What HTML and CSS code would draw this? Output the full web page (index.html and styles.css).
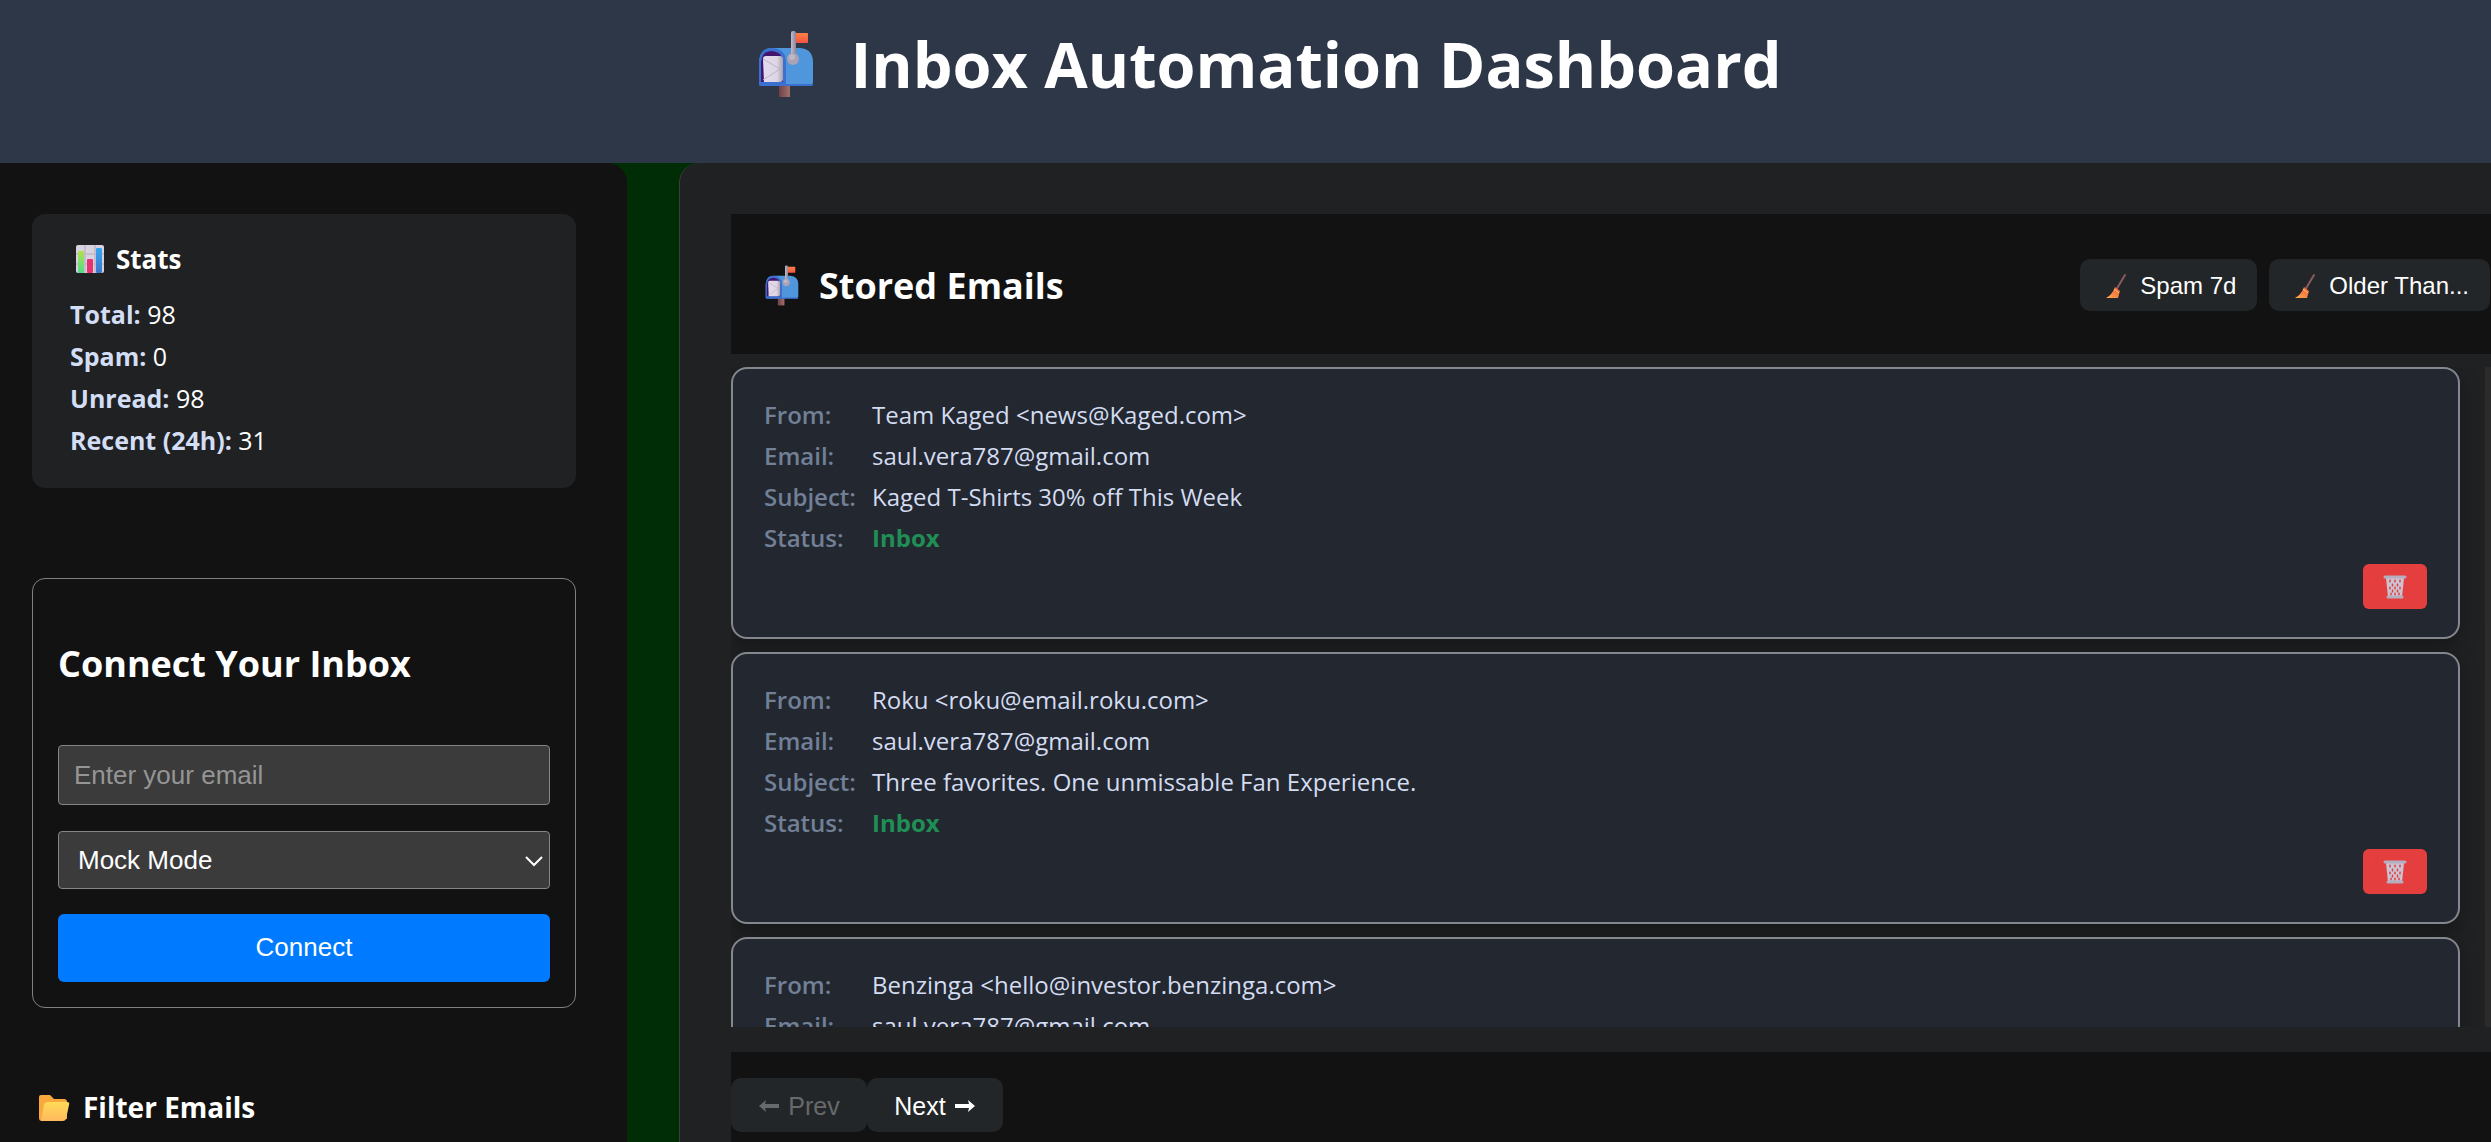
FILE: index.html
```html
<!DOCTYPE html>
<html lang="en">
<head>
<meta charset="utf-8">
<title>Inbox Automation Dashboard</title>
<link rel="stylesheet" href="styles.css">
</head>
<body>
<svg class="sprite" aria-hidden="true">
  <defs>
    <linearGradient id="flag" x1="0" y1="0" x2="0" y2="1"><stop offset="0" stop-color="#ff8044"/><stop offset="1" stop-color="#f45345"/></linearGradient>
    <linearGradient id="letter" x1="0" y1="0" x2="1" y2="0"><stop offset="0" stop-color="#e4daf0"/><stop offset=".7" stop-color="#ddd6e4"/><stop offset="1" stop-color="#a8a0ad"/></linearGradient>
    <linearGradient id="post" x1="0" y1="0" x2="1" y2="0"><stop offset="0" stop-color="#6f4049"/><stop offset="1" stop-color="#a1716c"/></linearGradient>
    <linearGradient id="pole" x1="0" y1="0" x2="1" y2="0"><stop offset="0" stop-color="#c3bcca"/><stop offset="1" stop-color="#8d8399"/></linearGradient>
    <linearGradient id="folder" x1="0" y1="0" x2="0" y2="1"><stop offset="0" stop-color="#ffdb57"/><stop offset="1" stop-color="#ffb95f"/></linearGradient>
    <linearGradient id="green" x1="0" y1="0" x2="0" y2="1"><stop offset="0" stop-color="#b0e04e"/><stop offset="1" stop-color="#52dc8b"/></linearGradient>
    <linearGradient id="blue" x1="0" y1="0" x2="0" y2="1"><stop offset="0" stop-color="#35a7f4"/><stop offset="1" stop-color="#3d77cb"/></linearGradient>
    <linearGradient id="bristle" x1="1" y1="0" x2="0" y2="1"><stop offset="0" stop-color="#f0553e"/><stop offset="1" stop-color="#ffb04e"/></linearGradient>
    <symbol id="i-mailbox" viewBox="0 0 56 68">
      <rect x="21" y="54" width="11" height="13" fill="url(#post)"/>
      <path d="M14 18H42Q55 19 55 32V52Q55 55 52 55H3Q1 55 1 53V32Q2 18 14 18Z" fill="#4f96dc"/>
      <path d="M1 53V32Q2 18 14 18Q28 19 28 32V55H3Q1 55 1 53Z" fill="#3a70cf"/>
      <path d="M3 52V32Q4 21 14 21Q25 22 25 33V52Z" fill="#43156f"/>
      <path d="M5 29Q5 26 8 26H22Q25 26 25 29V49Q25 52 22 52H6Z" fill="url(#letter)"/>
      <path d="M5 29L22 39L5 50" fill="none" stroke="#bdb3c5" stroke-width="1"/>
      <rect x="1" y="54" width="54" height="2" rx="1" fill="#3b6fd0"/>
      <rect x="37" y="3" width="13" height="10" rx="1" fill="url(#flag)"/>
      <rect x="33" y="1" width="5" height="28" rx="2" fill="url(#pole)"/>
      <circle cx="35" cy="29" r="6" fill="#aaa2b5"/><circle cx="34" cy="27" r="3" fill="#beb7c6"/>
    </symbol>
    <symbol id="i-chart" viewBox="0 0 28 28">
      <rect width="28" height="28" rx="2" fill="#d9d3df"/>
      <path d="M9 0V28M19 0V28M0 9H28M0 19H28" stroke="#bfb8c8" stroke-width="1.500"/>
      <rect x="2" y="6" width="6" height="22" rx="1" fill="url(#green)"/>
      <rect x="11" y="14" width="6" height="14" rx="1" fill="#e6336f"/>
      <rect x="20" y="3" width="6" height="25" rx="1" fill="url(#blue)"/>
    </symbol>
    <symbol id="i-folder" viewBox="0 0 32 28">
      <path d="M1 3Q1 1 3 1H12L16 5H26Q29 5 29 8V25L4 27Q1 27 1 24Z" fill="#f8a83c"/>
      <path d="M9 8H29Q32 8 31 11L28 25Q27 27 25 27H3L6 11Q7 8 9 8Z" fill="url(#folder)"/>
    </symbol>
    <symbol id="i-broom" viewBox="0 0 22 26">
      <path d="M20 2L11 17" stroke="#8c5a5e" stroke-width="2" stroke-linecap="round"/>
      <path d="M10 14L15 18L13 25H1Q7 22 10 14Z" fill="url(#bristle)"/>
      <path d="M9 16L14 20" stroke="#ffd05c" stroke-width="1"/>
    </symbol>
    <symbol id="i-trash" viewBox="0 0 24 24">
      <path d="M3 3L5 22H19L21 3Z" fill="#cbc3d2"/>
      <g fill="#e23f40"><path d="M7 4l1 2-1 2-1-2zM12 4l1 2-1 2-1-2zM17 4l1 2-1 2-1-2zM9.500 8l1 2-1 2-1-2zM14.500 8l1 2-1 2-1-2zM7 11l1 2-1 2-1-2zM12 11l1 2-1 2-1-2zM17 11l1 2-1 2-1-2zM9.500 14l1 2-1 2-1-2zM14.500 14l1 2-1 2-1-2zM12 17l1 2-1 2-1-2zM8 17l1 2-1 2-1-2zM16 17l1 2-1 2-1-2z"/></g>
      <path d="M2 2H22M5 22H19" stroke="#b5adc0" stroke-width="3" stroke-linecap="round"/>
    </symbol>
    <symbol id="i-left" viewBox="0 0 22 14"><path d="M1 7L8 1L7 5H21V9H7L8 13Z" fill="currentColor"/></symbol>
    <symbol id="i-right" viewBox="0 0 22 14"><path d="M21 7L14 1L15 5H1V9H15L14 13Z" fill="currentColor"/></symbol>
  </defs>
</svg>
<header class="page-header">
  <h1><svg class="icon-title"><use href="#i-mailbox"/></svg>Inbox Automation Dashboard</h1>
</header>
<div class="layout">
  <aside class="sidebar">
    <section class="stats">
      <h3><svg class="icon-chart"><use href="#i-chart"/></svg>Stats</h3>
      <p><strong>Total:</strong> 98</p>
      <p><strong>Spam:</strong> 0</p>
      <p><strong>Unread:</strong> 98</p>
      <p><strong>Recent (24h):</strong> 31</p>
    </section>
    <form class="connect">
      <h2>Connect Your Inbox</h2>
      <input type="email" placeholder="Enter your email" aria-label="Email">
      <div class="select-wrap">
        <select aria-label="Mode"><option>Mock Mode</option></select>
        <svg class="chevron" viewBox="0 0 18 12"><path d="M1 2L9 10L17 2" fill="none" stroke="#fff" stroke-width="2"/></svg>
      </div>
      <button type="button">Connect</button>
    </form>
    <h3 class="filter-title"><svg class="icon-folder"><use href="#i-folder"/></svg>Filter Emails</h3>
  </aside>
  <main class="main">
    <div class="toolbar">
      <h2><svg class="icon-mail"><use href="#i-mailbox"/></svg>Stored Emails</h2>
      <div class="actions">
        <button class="btn" type="button"><svg class="icon-broom"><use href="#i-broom"/></svg>Spam 7d</button>
        <button class="btn" type="button"><svg class="icon-broom"><use href="#i-broom"/></svg>Older Than...</button>
      </div>
    </div>
    <div class="list">
      <div class="cards">
        <article class="card">
          <dl>
            <dt>From:</dt><dd>Team Kaged &lt;news@Kaged.com&gt;</dd>
            <dt>Email:</dt><dd>saul.vera787@gmail.com</dd>
            <dt>Subject:</dt><dd>Kaged T-Shirts 30% off This Week</dd>
            <dt>Status:</dt><dd class="status">Inbox</dd>
          </dl>
          <button class="delete" type="button" aria-label="Delete"><svg><use href="#i-trash"/></svg></button>
        </article>
        <article class="card">
          <dl>
            <dt>From:</dt><dd>Roku &lt;roku@email.roku.com&gt;</dd>
            <dt>Email:</dt><dd>saul.vera787@gmail.com</dd>
            <dt>Subject:</dt><dd>Three favorites. One unmissable Fan Experience.</dd>
            <dt>Status:</dt><dd class="status">Inbox</dd>
          </dl>
          <button class="delete" type="button" aria-label="Delete"><svg><use href="#i-trash"/></svg></button>
        </article>
        <article class="card">
          <dl>
            <dt>From:</dt><dd>Benzinga &lt;hello@investor.benzinga.com&gt;</dd>
            <dt>Email:</dt><dd>saul.vera787@gmail.com</dd>
          </dl>
        </article>
      </div>
      <div class="track"></div>
    </div>
    <nav class="pager" aria-label="Pages">
      <button class="btn" type="button" disabled><svg class="arrow"><use href="#i-left"/></svg>Prev</button>
      <button class="btn" type="button">Next<svg class="arrow"><use href="#i-right"/></svg></button>
    </nav>
  </main>
</div>
</body>
</html>
```
FILE: styles.css
```css
* { box-sizing: border-box; }

body {
  margin: 0;
  height: 100vh;
  overflow: hidden;
  display: flex;
  flex-direction: column;
  background: #002d05;
  color: #fff;
  font: 24px/41px "Open Sans", "Noto Sans", sans-serif;
}

h1, h2, h3, p, dl, dd { margin: 0; }
h1, h2, h3, dt { display: flex; align-items: center; }
button, input, select { font: 26px/30px "Liberation Sans", Arial, sans-serif; color: #fff; }
button { border: 0; padding: 0; cursor: pointer; }
.sprite { position: absolute; width: 0; height: 0; }

.page-header {
  flex: none;
  display: flex;
  justify-content: center;
  padding: 24px 0 59px 49px;
  background: #2d3748;
}
h1 { gap: 36px; font-size: 63px; line-height: 80px; }
.icon-title { width: 56px; height: 68px; }

.layout { flex: 1; min-height: 0; display: flex; gap: 52px; }

.sidebar {
  flex: 0 0 627px;
  padding: 51px 51px 0 32px;
  background: #121212;
  border-top-right-radius: 20px;
}
.stats {
  padding: 23px 38px 27px;
  border-radius: 13px;
  background: #1f2122;
  font-size: 25px;
  line-height: 42px;
}
.stats h3 { gap: 12px; margin-bottom: 12px; padding-left: 6px; font-size: 26px; line-height: 44px; }
.stats strong { color: #d3def5; }
.icon-chart { width: 28px; height: 28px; }

.connect {
  display: flex;
  flex-direction: column;
  margin-top: 90px;
  padding: 60px 25px 25px;
  border: 1px solid #808080;
  border-radius: 13px;
}
.connect h2 { margin-bottom: 56px; font-size: 36px; line-height: 50px; }
.connect input, .connect select {
  width: 100%;
  height: 60px;
  padding: 0 15px;
  border: 1px solid #858585;
  border-radius: 4px;
  background: #3b3b3b;
}
.connect input::placeholder { color: #959595; }
.select-wrap { position: relative; margin: 26px 0 25px; }
.connect select { display: block; height: 58px; padding: 0 19px; appearance: none; }
.chevron { position: absolute; right: 7px; top: 24px; width: 18px; height: 12px; pointer-events: none; }
.connect button { height: 68px; padding-bottom: 2px; border-radius: 6px; background: #007bff; }

.filter-title { gap: 13px; margin-top: 79px; padding-left: 6px; font-size: 28px; }
.icon-folder { width: 32px; height: 28px; }

.main {
  flex: 1;
  min-width: 0;
  display: flex;
  flex-direction: column;
  padding: 51px 0 0 51px;
  border-left: 1px solid #3a3e3c;
  border-top-left-radius: 20px;
  background: #1f2122;
}
.toolbar {
  flex: none;
  display: flex;
  align-items: center;
  justify-content: space-between;
  height: 140px;
  padding: 2px 1px 0 34px;
  background: #121212;
}
.toolbar h2 { gap: 20px; font-size: 36px; }
.icon-mail { width: 34px; height: 41px; }
.actions { display: flex; gap: 12px; }
.btn {
  display: flex;
  align-items: center;
  justify-content: center;
  height: 52px;
  padding: 2px 21px 0;
  border-radius: 10px;
  background: #222628;
  font-size: 24px;
}
.icon-broom { width: 22px; height: 26px; margin: 0 13px 0 4px; }

.list { flex: none; display: flex; height: 660px; margin-top: 13px; overflow: hidden; }
.cards { flex: 1; display: flex; flex-direction: column; gap: 13px; }
.card {
  flex: none;
  display: flex;
  flex-direction: column;
  align-items: flex-end;
  justify-content: space-between;
  height: 272px;
  padding: 25px 31px 28px;
  border: 2px solid #84878d;
  border-radius: 16px;
  background: #232730;
  box-shadow: 0 6px 20px rgba(0, 0, 0, 0.3);
  color: #d3dcf0;
}
.card dl { align-self: stretch; display: grid; grid-template-columns: 108px 1fr; grid-auto-rows: 41px; }
.card dt { color: #718096; font-weight: 600; }
.card .status { color: #1f8f55; font-weight: 700; }
.delete { display: grid; place-items: center; flex: none; width: 64px; height: 45px; border-radius: 6px; background: #e53e3e; }
.delete svg { width: 24px; height: 24px; }
.track { flex: 0 0 6px; margin-left: 25px; background: #2b2b2b; }

.pager { flex: 1; display: flex; margin-top: 25px; padding-top: 26px; background: #121212; }
.pager .btn { gap: 8px; width: 136px; height: 54px; font-size: 25px; }
.pager .btn:disabled { color: #67696b; }
.arrow { width: 22px; height: 14px; }
```
